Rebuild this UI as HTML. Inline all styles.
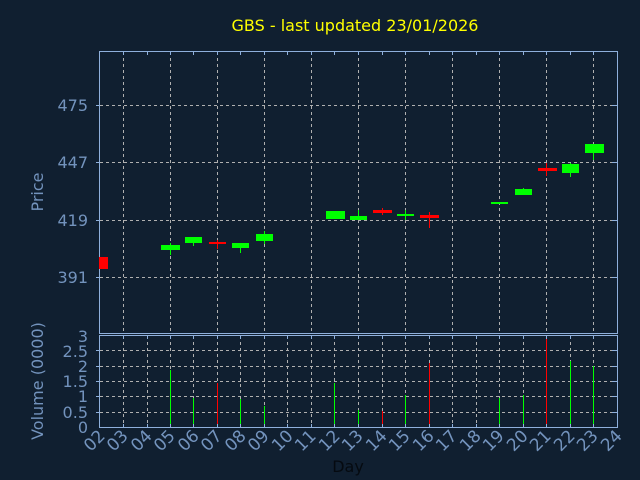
<!DOCTYPE html>
<html><head><meta charset="utf-8"><style>
html,body{margin:0;padding:0;background:#101f30;}
svg{display:block;font-family:"DejaVu Sans","Liberation Sans",sans-serif;}
</style></head><body>
<svg width="640" height="480" viewBox="0 0 640 480">
<rect width="640" height="480" fill="#101f30"/>
<text x="355" y="31" fill="#ffff00" font-size="16" text-anchor="middle">GBS - last updated 23/01/2026</text>
<g stroke="#b0b0b0" stroke-width="1" stroke-dasharray="3,3">
<path d="M100 105.5H617M100 162.5H617M100 220.5H617M100 277.5H617"/>
<path d="M123.5 52V333M170.5 52V333M217.5 52V333M264.5 52V333M311.5 52V333M358.5 52V333M405.5 52V333M452.5 52V333M499.5 52V333M546.5 52V333M593.5 52V333"/>
<path d="M100 412.5H617M100 396.5H617M100 381.5H617M100 366.5H617M100 350.5H617"/>
<path d="M123.5 336V427M147.5 336V427M170.5 336V427M193.5 336V427M217.5 336V427M240.5 336V427M264.5 336V427M287.5 336V427M311.5 336V427M334.5 336V427M358.5 336V427M382.5 336V427M405.5 336V427M429.5 336V427M452.5 336V427M476.5 336V427M499.5 336V427M523.5 336V427M546.5 336V427M570.5 336V427M593.5 336V427"/>
</g>
<g fill="none" stroke="#8fb0dc" stroke-width="1">
<rect x="99.5" y="51.5" width="518" height="282"/>
<rect x="99.5" y="335.5" width="518" height="92"/>
</g>
<g fill="#ff0000"><rect x="99" y="257" width="9" height="12"/></g>
<g stroke-width="1">
<g stroke="#00ff00">
<path d="M170.5 243V255M193.5 237V246M240.5 243V253M264.5 231V244M335.5 211V219M358.5 210V220M405.5 210V220M499.5 202V204M523.5 188V195M570.5 163V177M593.5 144V160"/>
</g>
<g stroke="#ff0000"><path d="M217.5 240V249M382.5 208V215M429.5 212V228M546.5 163V176"/></g>
</g>
<g fill="#00ff00">
<rect x="161" y="245" width="19" height="5"/><rect x="185" y="237" width="17" height="6"/>
<rect x="232" y="243" width="17" height="5"/><rect x="256" y="234" width="17" height="7"/>
<rect x="326" y="211" width="19" height="8"/><rect x="350" y="216" width="17" height="4"/>
<rect x="397" y="214" width="17" height="2"/><rect x="491" y="202" width="17" height="2"/>
<rect x="515" y="189" width="17" height="6"/><rect x="562" y="164" width="17" height="9"/>
<rect x="585" y="144" width="19" height="9"/>
</g>
<g fill="#ff0000">
<rect x="209" y="242" width="17" height="2"/><rect x="373" y="210" width="19" height="3"/>
<rect x="420" y="215" width="19" height="3"/><rect x="538" y="168" width="19" height="3"/>
</g>
<g stroke-width="1">
<g stroke="#00ff00"><path d="M170.5 370V427M193.5 398V427M240.5 399V427M264.5 406V427M334.5 383V427M358.5 410V427M405.5 395V427M499.5 398V427M523.5 395V427M570.5 361V427M593.5 366V427"/></g>
<g stroke="#ff0000"><path d="M217.5 383V427M382.5 411V427M429.5 363V427M546.5 338V427"/></g>
</g>
<g stroke="#8fb0dc" stroke-width="1">
<path d="M123.5 52V55M147.5 52V55M170.5 52V55M193.5 52V55M217.5 52V55M240.5 52V55M264.5 52V55M287.5 52V55M311.5 52V55M334.5 52V55M358.5 52V55M382.5 52V55M405.5 52V55M429.5 52V55M452.5 52V55M476.5 52V55M499.5 52V55M523.5 52V55M546.5 52V55M570.5 52V55M593.5 52V55"/>
<path d="M123.5 336V339M147.5 336V339M170.5 336V339M193.5 336V339M217.5 336V339M240.5 336V339M264.5 336V339M287.5 336V339M311.5 336V339M334.5 336V339M358.5 336V339M382.5 336V339M405.5 336V339M429.5 336V339M452.5 336V339M476.5 336V339M499.5 336V339M523.5 336V339M546.5 336V339M570.5 336V339M593.5 336V339"/>
<path d="M123.5 427V424M147.5 427V424M170.5 427V424M193.5 427V424M217.5 427V424M240.5 427V424M264.5 427V424M287.5 427V424M311.5 427V424M334.5 427V424M358.5 427V424M382.5 427V424M405.5 427V424M429.5 427V424M452.5 427V424M476.5 427V424M499.5 427V424M523.5 427V424M546.5 427V424M570.5 427V424M593.5 427V424"/>
<path d="M96 105.5H100M96 162.5H100M96 220.5H100M96 277.5H100M612 105.5H617M612 162.5H617M612 220.5H617M612 277.5H617M96 412.5H100M96 396.5H100M96 381.5H100M96 366.5H100M96 350.5H100M612 412.5H617M612 396.5H617M612 381.5H617M612 366.5H617M612 350.5H617"/>
</g>
<g fill="#7393bd" font-size="16" text-anchor="end">
<text x="88" y="111">475</text><text x="88" y="168">447</text><text x="88" y="226">419</text><text x="88" y="283">391</text>
<text x="88" y="342">3</text><text x="88" y="357">2.5</text><text x="88" y="372">2</text><text x="88" y="387">1.5</text><text x="88" y="402">1</text><text x="88" y="418">0.5</text><text x="88" y="433">0</text>
</g>
<text transform="translate(43,192) rotate(-90)" fill="#7393bd" font-size="16" text-anchor="middle">Price</text>
<text transform="translate(43,381) rotate(-90)" fill="#7393bd" font-size="16" text-anchor="middle">Volume (0000)</text>
<g fill="#7393bd" font-size="17" text-anchor="end">
<text transform="translate(106,437) rotate(-45)">02</text>
<text transform="translate(129,437) rotate(-45)">03</text>
<text transform="translate(153,437) rotate(-45)">04</text>
<text transform="translate(176,437) rotate(-45)">05</text>
<text transform="translate(200,437) rotate(-45)">06</text>
<text transform="translate(223,437) rotate(-45)">07</text>
<text transform="translate(247,437) rotate(-45)">08</text>
<text transform="translate(270,437) rotate(-45)">09</text>
<text transform="translate(294,437) rotate(-45)">10</text>
<text transform="translate(317,437) rotate(-45)">11</text>
<text transform="translate(341,437) rotate(-45)">12</text>
<text transform="translate(364,437) rotate(-45)">13</text>
<text transform="translate(388,437) rotate(-45)">14</text>
<text transform="translate(411,437) rotate(-45)">15</text>
<text transform="translate(435,437) rotate(-45)">16</text>
<text transform="translate(458,437) rotate(-45)">17</text>
<text transform="translate(482,437) rotate(-45)">18</text>
<text transform="translate(505,437) rotate(-45)">19</text>
<text transform="translate(529,437) rotate(-45)">20</text>
<text transform="translate(552,437) rotate(-45)">21</text>
<text transform="translate(576,437) rotate(-45)">22</text>
<text transform="translate(599,437) rotate(-45)">23</text>
<text transform="translate(623,437) rotate(-45)">24</text>
</g>
<text x="348" y="472" fill="#050a10" font-size="16" text-anchor="middle">Day</text>
</svg>
</body></html>
